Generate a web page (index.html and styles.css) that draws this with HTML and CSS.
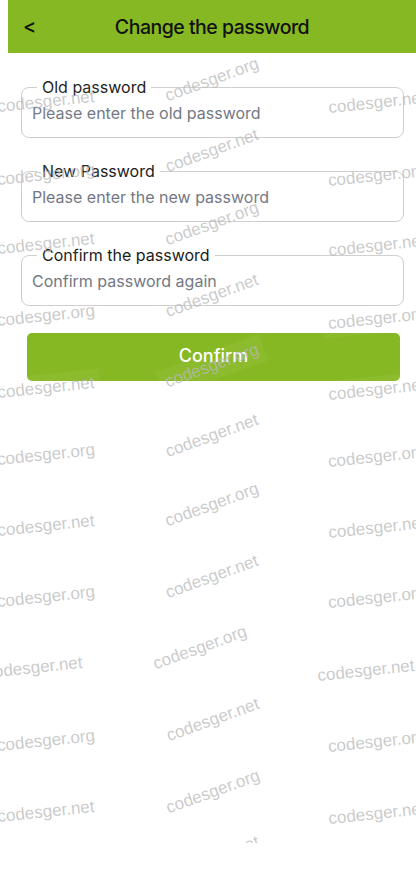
FILE: index.html
```html
<!DOCTYPE html>
<html lang="en">
<head>
<meta charset="utf-8">
<title>Change the password</title>
<link rel="stylesheet" href="styles.css">
</head>
<body>
<div class="page">
  <header class="topbar">
    <span class="back">&lt;</span>
    <h1 class="title">Change the password</h1>
    <span></span>
  </header>

  <form class="form">
    <fieldset class="field">
      <legend class="field-label">Old password</legend>
      <input class="field-input" type="password" placeholder="Please enter the old password">
    </fieldset>
    <fieldset class="field">
      <legend class="field-label">New Password</legend>
      <input class="field-input" type="password" placeholder="Please enter the new password">
    </fieldset>
    <fieldset class="field">
      <legend class="field-label">Confirm the password</legend>
      <input class="field-input" type="password" placeholder="Confirm password again">
    </fieldset>
    <button class="submit" type="button">Confirm</button>
  </form>

  <div class="watermarks" aria-hidden="true">
    <span class="wm side" style="left:46px;top:102px">codesger.net</span>
    <span class="wm side" style="left:46px;top:175px">codesger.org</span>
    <span class="wm side" style="left:46px;top:244px">codesger.net</span>
    <span class="wm side" style="left:46px;top:316px">codesger.org</span>
    <span class="wm side" style="left:46px;top:388px">codesger.net</span>
    <span class="wm side" style="left:46px;top:455px">codesger.org</span>
    <span class="wm side" style="left:46px;top:526px">codesger.net</span>
    <span class="wm side" style="left:46px;top:597px">codesger.org</span>
    <span class="wm side" style="left:34px;top:668px">codesger.net</span>
    <span class="wm side" style="left:46px;top:741px">codesger.org</span>
    <span class="wm side" style="left:46px;top:812px">codesger.net</span>

    <span class="wm mid" style="left:212px;top:80px">codesger.org</span>
    <span class="wm mid" style="left:212px;top:151px">codesger.net</span>
    <span class="wm mid" style="left:212px;top:224px">codesger.org</span>
    <span class="wm mid" style="left:212px;top:296px">codesger.net</span>
    <span class="wm mid" style="left:212px;top:366px">codesger.org</span>
    <span class="wm mid" style="left:212px;top:436px">codesger.net</span>
    <span class="wm mid" style="left:212px;top:505px">codesger.org</span>
    <span class="wm mid" style="left:212px;top:577px">codesger.net</span>
    <span class="wm mid" style="left:200px;top:648px">codesger.org</span>
    <span class="wm mid" style="left:213px;top:720px">codesger.net</span>
    <span class="wm mid" style="left:213px;top:792px">codesger.org</span>
    <span class="wm mid" style="left:213px;top:858px">codesger.net</span>

    <span class="wm side" style="left:377px;top:103px">codesger.net</span>
    <span class="wm side" style="left:377px;top:176px">codesger.org</span>
    <span class="wm side" style="left:377px;top:246px">codesger.net</span>
    <span class="wm side" style="left:377px;top:319px">codesger.org</span>
    <span class="wm side" style="left:377px;top:390px">codesger.net</span>
    <span class="wm side" style="left:377px;top:457px">codesger.org</span>
    <span class="wm side" style="left:377px;top:528px">codesger.net</span>
    <span class="wm side" style="left:377px;top:598px">codesger.org</span>
    <span class="wm side" style="left:366px;top:671px">codesger.net</span>
    <span class="wm side" style="left:377px;top:742px">codesger.org</span>
    <span class="wm side" style="left:377px;top:814px">codesger.net</span>
  </div>
</div>
</body>
</html>
```

FILE: styles.css
```css
* {
  box-sizing: border-box;
}

html, body {
  margin: 0;
  padding: 0;
  background: #ffffff;
}

body {
  font-family: Inter, "Noto Sans", sans-serif;
  color: #1b1c20;
}

.page {
  position: relative;
  width: 416px;
  min-height: 889px;
  overflow: hidden;
}

.topbar {
  position: relative;
  z-index: 2;
  margin-left: 8px;
  height: 53px;
  background: #86b823;
  display: grid;
  grid-template-columns: 1fr auto 1fr;
  align-items: center;
}

.back {
  padding-left: 15px;
  font-size: 20px;
  font-weight: 500;
  color: #111;
  line-height: 1;
  padding-bottom: 1px;
}

.title {
  margin: 0;
  font-size: 19.5px;
  font-weight: 500;
  color: #111111;
  letter-spacing: -0.5px;
}

.form {
  display: flex;
  flex-direction: column;
  gap: 23px;
  padding-top: 24px;
}

.field {
  margin: 0 12px 0 21px;
  padding: 0 10px 8px 10px;
  border: 1px solid #cdcdcd;
  border-radius: 8px;
  min-width: 0;
}

.field-label {
  margin-left: 5px;
  padding: 0 5px;
  font-size: 16px;
  line-height: 20px;
  color: #1b1c20;
}

.field-input {
  display: block;
  width: 100%;
  height: 32px;
  padding: 0;
  border: none;
  outline: none;
  background: transparent;
  font-family: Inter, "Noto Sans", sans-serif;
  font-size: 16px;
  color: #333;
}

.field-input::placeholder {
  color: #737884;
  opacity: 1;
}

.submit {
  margin: 4px 16px 0 27px;
  height: 48px;
  border: none;
  border-radius: 5px;
  background: #86b823;
  color: #ffffff;
  font-family: Inter, "Noto Sans", sans-serif;
  font-size: 18px;
  font-weight: 500;
  padding: 0 0 3px 0;
}

.watermarks {
  position: absolute;
  top: 0;
  left: 0;
  width: 416px;
  height: 843px;
  overflow: hidden;
  pointer-events: none;
  z-index: 1;
}

.wm {
  position: absolute;
  white-space: nowrap;
  font-family: "Liberation Sans", Arial, sans-serif;
  font-size: 17px;
  line-height: 20px;
  color: rgba(185, 185, 185, 0.75);
  background: rgba(255, 255, 255, 0.05);
  padding: 4px 6px;
}

.wm.side {
  transform: translate(-50%, -50%) rotate(-6deg);
}

.wm.mid {
  transform: translate(-50%, -50%) rotate(-20deg);
}
```
